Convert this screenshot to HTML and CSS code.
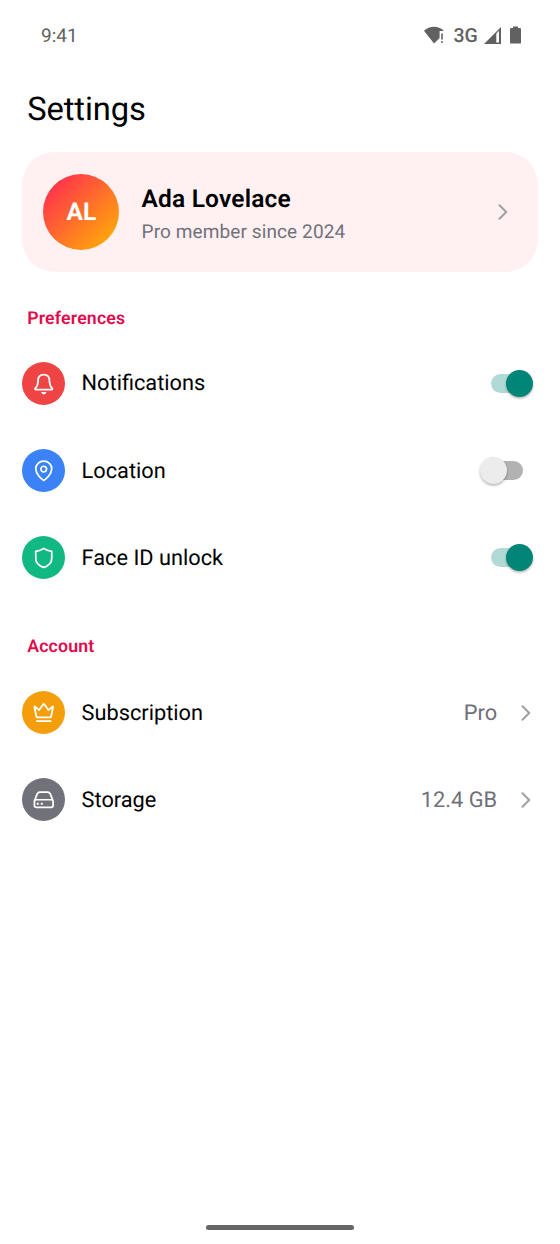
FILE: index.html
```html
<!DOCTYPE html>
<html lang="en">
<head>
<meta charset="utf-8">
<title>Settings</title>
<link rel="stylesheet" href="styles.css">
</head>
<body>
<div class="screen">
  <header class="statusbar">
    <span class="clock">9:41</span>
    <div class="status-icons">
      <svg class="wifi" viewBox="0 0 20 18"><path d="M0 4.8C5.5-.6 14-.6 19.4 4.3V5H15.6V12L10 17.6Z"/><path d="M17.2 7.4h1.6v6h-1.6zM17.2 15.2h1.6v1.8h-1.6z"/></svg>
      <span class="network">3G</span>
      <svg class="signal" viewBox="0 0 17 17"><path fill-rule="evenodd" d="M17 0V17H0ZM12.3 6.4V15.4H15V3.8Z"/></svg>
      <svg class="battery" viewBox="0 0 11 18"><path d="M3 2V.4h5V2h1.8Q11 2 11 3.2V16.4Q11 17.6 9.8 17.6H1.2Q0 17.6 0 16.4V3.2Q0 2 1.2 2Z"/></svg>
    </div>
  </header>
  <main class="content">
    <h1 class="title">Settings</h1>
    <a class="profile">
      <span class="avatar">AL</span>
      <span class="profile-text">
        <span class="name">Ada Lovelace</span>
        <span class="member">Pro member since 2024</span>
      </span>
      <svg class="chevron" viewBox="0 0 10 16"><path d="M1.5 1.2 8.2 8l-6.7 6.8"/></svg>
    </a>
    <h2 class="section">Preferences</h2>
    <div class="row">
      <svg class="icon red" viewBox="-65.3 -65.3 130.6 130.6"><path d="M-17-10C-17-21-10-27.500 0-27.500S17-21 17-10C17 2 19 7 25 13Q28 17.500 23 17.500H-23Q-28 17.500-25 13C-19 7-17 2-17-10Z"/><path class="solid" d="M-8 25H8Q6 32 0 32T-8 25Z"/></svg>
      <span class="label">Notifications</span>
      <span class="switch on"></span>
    </div>
    <div class="row">
      <svg class="icon blue" viewBox="-65.3 -65.3 130.6 130.6"><path d="M0 29C-6 26-24 10-24-6A24 23 0 0 1 24-6C24 10 6 26 0 29Z"/><circle cy="-5" r="8.5"/></svg>
      <span class="label">Location</span>
      <span class="switch"></span>
    </div>
    <div class="row">
      <svg class="icon green" viewBox="-65.3 -65.3 130.6 130.6"><path d="M0-28C6-23 14-20 24-19V2C24 17 11 25 0 29C-11 25-24 17-24 2V-19C-14-20-6-23 0-28Z"/></svg>
      <span class="label">Face ID unlock</span>
      <span class="switch on"></span>
    </div>
    <h2 class="section account">Account</h2>
    <div class="row">
      <svg class="icon amber" viewBox="-65.3 -65.3 130.6 130.6"><path d="M-28-17-22 12Q-21 14-19 14H19Q21 14 22 12L28-17Q28-20 26-18L14-8 2-25Q0-28-2-25L-14-8-26-18Q-28-20-28-17ZM-21 25H21"/></svg>
      <span class="label">Subscription</span>
      <span class="value">Pro</span>
      <svg class="chevron" viewBox="0 0 10 16"><path d="M1.5 1.2 8.2 8l-6.7 6.8"/></svg>
    </div>
    <div class="row">
      <svg class="icon gray" viewBox="-65.3 -65.3 130.6 130.6"><path d="M-28 4 -20-17Q-17-23-12-23H12Q17-23 20-17L28 4V17Q28 23 22 23H-22Q-28 23-28 17ZM-28 5Q-27 0-22 0H22Q27 0 28 5"/><path class="solid" d="M-21 9h6v6h-6zM-9 9h6v6h-6z"/></svg>
      <span class="label">Storage</span>
      <span class="value">12.4 GB</span>
      <svg class="chevron" viewBox="0 0 10 16"><path d="M1.5 1.2 8.2 8l-6.7 6.8"/></svg>
    </div>
  </main>
  <footer class="home"><span class="home-bar"></span></footer>
</div>
</body>
</html>
```
FILE: styles.css
```css
* { box-sizing: border-box; }
body { margin: 0; background: #fff; color: #000; font-family: Roboto, sans-serif; text-rendering: geometricPrecision; }
.screen { height: 1244px; display: flex; flex-direction: column; }
.statusbar { height: 70px; padding: 0 39px 0 41px; display: flex; align-items: center; justify-content: space-between; color: #616161; font-size: 19px; }
.status-icons { display: flex; align-items: center; fill: #616161; }
.wifi { width: 20px; height: 18px; margin-right: 9.5px; }
.network { font-weight: 500; width: 25px; margin-right: 5.5px; font-size: 19.5px; letter-spacing: -.2px; }
.signal { width: 17px; height: 17px; margin-right: 9px; }
.battery { width: 11px; height: 18px; }
.content { flex: 1; padding: 0 21.8px; }
.title { margin: 18px 0 22.3px 5.4px; font-size: 32.7px; font-weight: 400; line-height: 42px; letter-spacing: -.1px; }
.profile { height: 119.3px; border-radius: 32.7px; background: #fff1f2; padding: 0 30px 0 21.5px; display: flex; align-items: center; }
.avatar { width: 76.2px; height: 76.2px; border-radius: 50%; background: linear-gradient(135deg, #ff2056, #ffb900); color: #fff; font-size: 24.5px; font-weight: 700; display: flex; align-items: center; justify-content: center; margin-right: 22.1px; }
.profile-text { flex: 1; display: flex; flex-direction: column; padding-top: 4.5px; }
.name { font-size: 24.5px; font-weight: 600; line-height: 34px; letter-spacing: .18px; }
.member { font-size: 19.05px; line-height: 31px; color: #71717b; letter-spacing: .09px; }
.chevron { width: 10px; height: 16px; fill: none; stroke: #9f9fa6; stroke-width: 2; stroke-linecap: round; stroke-linejoin: round; }
.section { margin: 35.2px 0 9.1px 5.4px; font-size: 17.7px; line-height: 24px; font-weight: 600; color: #e00b4e; letter-spacing: .18px; }
.section.account { margin-top: 34.3px; margin-bottom: 9.5px; }
.row { height: 87.1px; display: flex; align-items: center; padding-right: 7px; }
.icon { width: 43.5px; height: 43.5px; border-radius: 50%; margin-right: 16.3px; fill: none; stroke: #fff; stroke-width: 5.2; stroke-linejoin: round; stroke-linecap: round; }
.solid { fill: #fff; stroke: none; }
.red { background: #ef4444; }
.blue { background: #3b82f6; }
.green { background: #10b981; }
.amber { background: #f59e0b; }
.gray { background: #71717a; }
.label { flex: 1; font-size: 21.75px; padding-top: 1px; }
.value { font-size: 21.8px; color: #71717b; margin-right: 24px; padding-top: 1px; }
.switch { position: relative; width: 32px; height: 19px; border-radius: 10px; background: #b2b2b2; margin-right: 8.2px; }
.switch::after { content: ""; position: absolute; width: 27.2px; height: 27.2px; top: -4px; left: -11.2px; border-radius: 50%; background: #ececec; box-shadow: 0 1.5px 2.5px rgba(0,0,0,.3); }
.switch.on { background: #b2dad5; }
.switch.on::after { left: 15.2px; background: #008577; }
.home { height: 33px; display: flex; justify-content: center; padding-top: 13.5px; }
.home-bar { width: 148px; height: 5.5px; border-radius: 3px; background: #666; }
```
